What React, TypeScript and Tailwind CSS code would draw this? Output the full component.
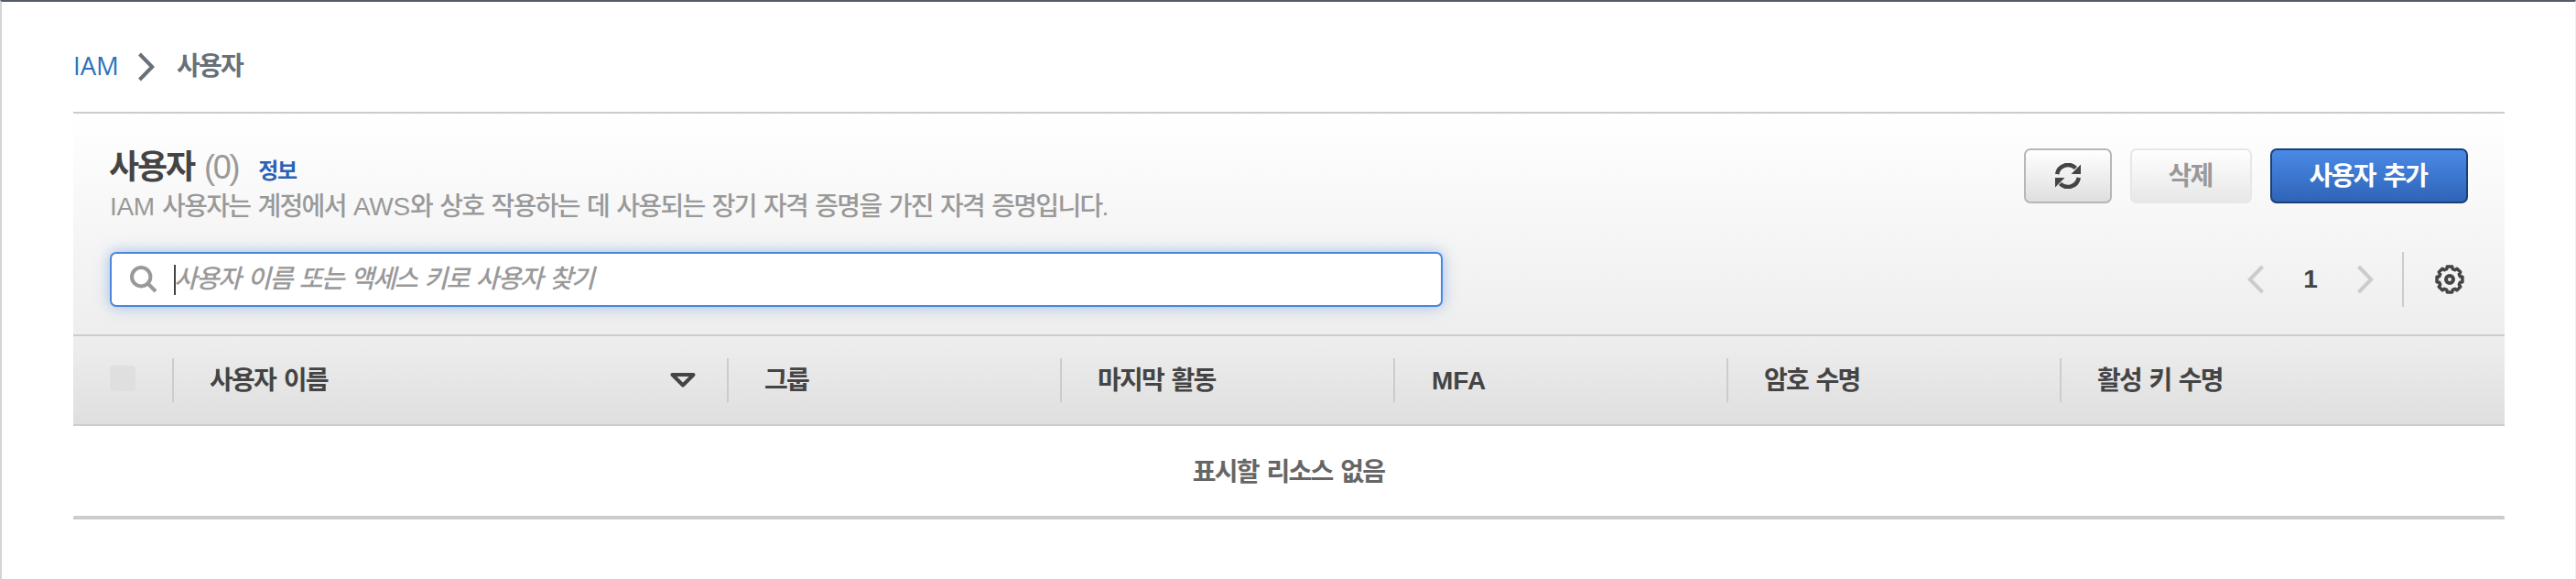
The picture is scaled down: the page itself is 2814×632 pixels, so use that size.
const base = "font-['Liberation_Sans','Noto_Sans_CJK_KR',sans-serif]";

const columns = ['그룹', '마지막 활동', 'MFA', '암호 수명', '활성 키 수명'];

const gearOutline =
  'M' +
  Array.from({ length: 8 }, (_, i) =>
    [
      [-11, 14.2],
      [11, 14.2],
      [16, 11.8],
      [29, 11.8],
    ].map(([offset, r]) => {
      const a = ((i * 45 + offset) * Math.PI) / 180;
      return `${(16 + r * Math.sin(a)).toFixed(2)} ${(16 - r * Math.cos(a)).toFixed(2)}`;
    }).join('L')
  ).join('L') +
  'z';

function Chevron({ flip = false, className = '' }: { flip?: boolean; className?: string }) {
  return (
    <svg viewBox="0 0 18 32" className={`h-8 w-[18px] shrink-0 ${className}`} fill="none" stroke="currentColor" strokeWidth="4">
      <path d={flip ? 'M16.5 2 2.8 16l13.7 14' : 'M1.5 2 15.2 16 1.5 30'} />
    </svg>
  );
}

function Breadcrumb() {
  return (
    <nav className="flex h-[120px] items-center pb-0.5 pt-[24px] text-[28px] leading-10">
      <a className="w-[71px] pb-[3px] font-['Open_Sans',sans-serif] text-[27.5px] font-medium text-[#2b71bb]">IAM</a>
      <Chevron className="text-[#687078]" />
      <span className="ml-6 font-bold tracking-[-1.7px] text-[#687078]">사용자</span>
    </nav>
  );
}

function Toolbar() {
  return (
    <div className="flex items-start gap-5">
      <button className="flex h-[60px] w-24 items-center justify-center rounded-[7px] border-2 border-[#b7b7b7] bg-linear-to-b from-white to-[#dfdfdf] text-[#444]">
        <svg viewBox="0 0 28 28" className="size-7" fill="none" stroke="currentColor" strokeWidth="4.5">
          <path d="M2.2 12a12 12 0 0 1 20.3-6.5M25.8 16a12 12 0 0 1-20.3 6.5" />
          <path d="M28 1.5V12H17.500zM0 26.500V16h10.500z" fill="currentColor" stroke="none" />
        </svg>
      </button>
      <button className="h-[60px] w-[133px] rounded-[7px] border-2 border-[#e7e7e7] bg-linear-to-b from-white to-[#e7e7e7] pr-0.5 pt-px text-[28px] leading-[55px] font-bold tracking-[-1.7px] text-[#999]">삭제</button>
      <button className="h-[60px] w-[216px] rounded-[7px] border-2 border-[#1a4075] bg-linear-to-b from-[#4a8ae6] to-[#2f64b8] pr-0.5 pt-px text-[28px] leading-[55px] font-bold tracking-[-1.7px] [word-spacing:2.5px] text-white">사용자 추가</button>
    </div>
  );
}

export default function App() {
  return (
    <main className={`${base} h-[632px] w-[2814px] overflow-hidden border-l-2 border-r border-t-2 border-l-[#d0d6d6] border-r-[#eee] border-t-[#545b64] bg-white pl-[78px] pr-[77px]`}>
      <Breadcrumb />
      <section className="w-[2656px] border-t-2 border-[#ccc]">
        <header className="h-[241px] bg-linear-to-b from-white to-[#eee] pl-10 pr-10 pt-[38px]">
          <div className="flex h-[113px] justify-between">
            <div>
              <h1 className="flex h-[42px] items-baseline text-[36px] leading-[42px]">
                <span className="-ml-px font-bold tracking-[-2.1px] text-[#444]">사용자</span>
                <span className="ml-[11px] tracking-[-2.3px] text-[#999]">(0)</span>
                <a className="ml-[22px] text-[24px] font-bold tracking-[-1.3px] text-[#2a62b8]">정보</a>
              </h1>
              <p className="pt-[2px] text-[28px] font-medium leading-10 tracking-[-1.7px] [word-spacing:2.1px] text-[#999]">
                <span className="tracking-[-0.3px]">IAM</span> 사용자는 계정에서 <span className="tracking-[-0.2px]">AWS</span>와 상호 작용하는 데 사용되는 장기 자격 증명을 가진 자격 증명입니다.
              </p>
            </div>
            <Toolbar />
          </div>
          <div className="flex h-[60px] items-center justify-between">
            <label className="flex h-[60px] w-[1456px] items-center rounded-[7px] border-2 border-[#4a86dc] bg-white pl-5 shadow-[0_0_16px_#4a86dc80]">
              <svg viewBox="0 0 30 30" className="size-[30px] text-[#999]" fill="none" stroke="currentColor" strokeWidth="4">
                <circle cx="12.2" cy="12.2" r="10.2" />
                <path d="m19 19 9 9" />
              </svg>
              <span className="ml-[18px] h-[33px] w-0.5 bg-[#444]" />
              <span className="-ml-0.5 text-[28px] font-medium italic leading-[52px] tracking-[-1.7px] [word-spacing:2.1px] text-[#999]">사용자 이름 또는 액세스 키로 사용자 찾기</span>
            </label>
            <div className="flex h-[60px] items-center pr-1">
              <Chevron flip className="text-[#ccc]" />
              <span className="w-[102px] text-center text-[28px] font-bold text-[#444]">1</span>
              <Chevron className="text-[#ccc]" />
              <span className="ml-[31px] mr-[34px] h-[60px] w-0.5 bg-[#ccc]" />
              <svg viewBox="0 0 32 32" className="size-8 text-[#444]" fill="none" stroke="currentColor" strokeWidth="4" strokeLinejoin="round">
                <path d={gearOutline} strokeWidth="3.5" />
                <circle cx="16" cy="16" r="4" />
              </svg>
            </div>
          </div>
        </header>
        <div className="flex h-[100px] items-center border-y-2 border-[#ccc] bg-linear-to-b from-[#eee] to-[#dfdfdf] text-[28px] font-bold text-[#444]">
          <div className="flex h-12 w-[110px] items-center border-r-2 border-[#ccc] pl-10">
            <span className="mb-1 size-7 rounded-[4px] bg-[#dfdfdf]" />
          </div>
          <div className="flex h-12 w-[606px] items-center justify-between border-r-2 border-[#ccc] pl-[39px] pr-[34px]">
            <span className="pt-0.5 tracking-[-1.7px] [word-spacing:2.5px]">사용자 이름</span>
            <svg viewBox="0 0 28 16" className="h-4 w-7" fill="none" stroke="currentColor" strokeWidth="4" strokeLinejoin="round">
              <path d="M2.500 2h23L14 13.500z" />
            </svg>
          </div>
          {columns.map((c, i) => (
            <div key={c} className={`flex h-12 w-[364px] items-center ${c === 'MFA' ? 'pl-10 pt-px' : 'pl-[39px] pt-0.5 tracking-[-1.7px] [word-spacing:2.2px]'} ${i < 4 ? 'border-r-2 border-[#ccc]' : ''}`}>{c}</div>
          ))}
        </div>
        <div className="flex h-[98px] items-center justify-center pr-px pt-[3px] text-[28px] font-bold tracking-[-1.7px] [word-spacing:2.5px] text-[#666]">표시할 리소스 없음</div>
        <div className="h-1 rounded-t-[2px] bg-[#ccc]" />
      </section>
    </main>
  );
}
